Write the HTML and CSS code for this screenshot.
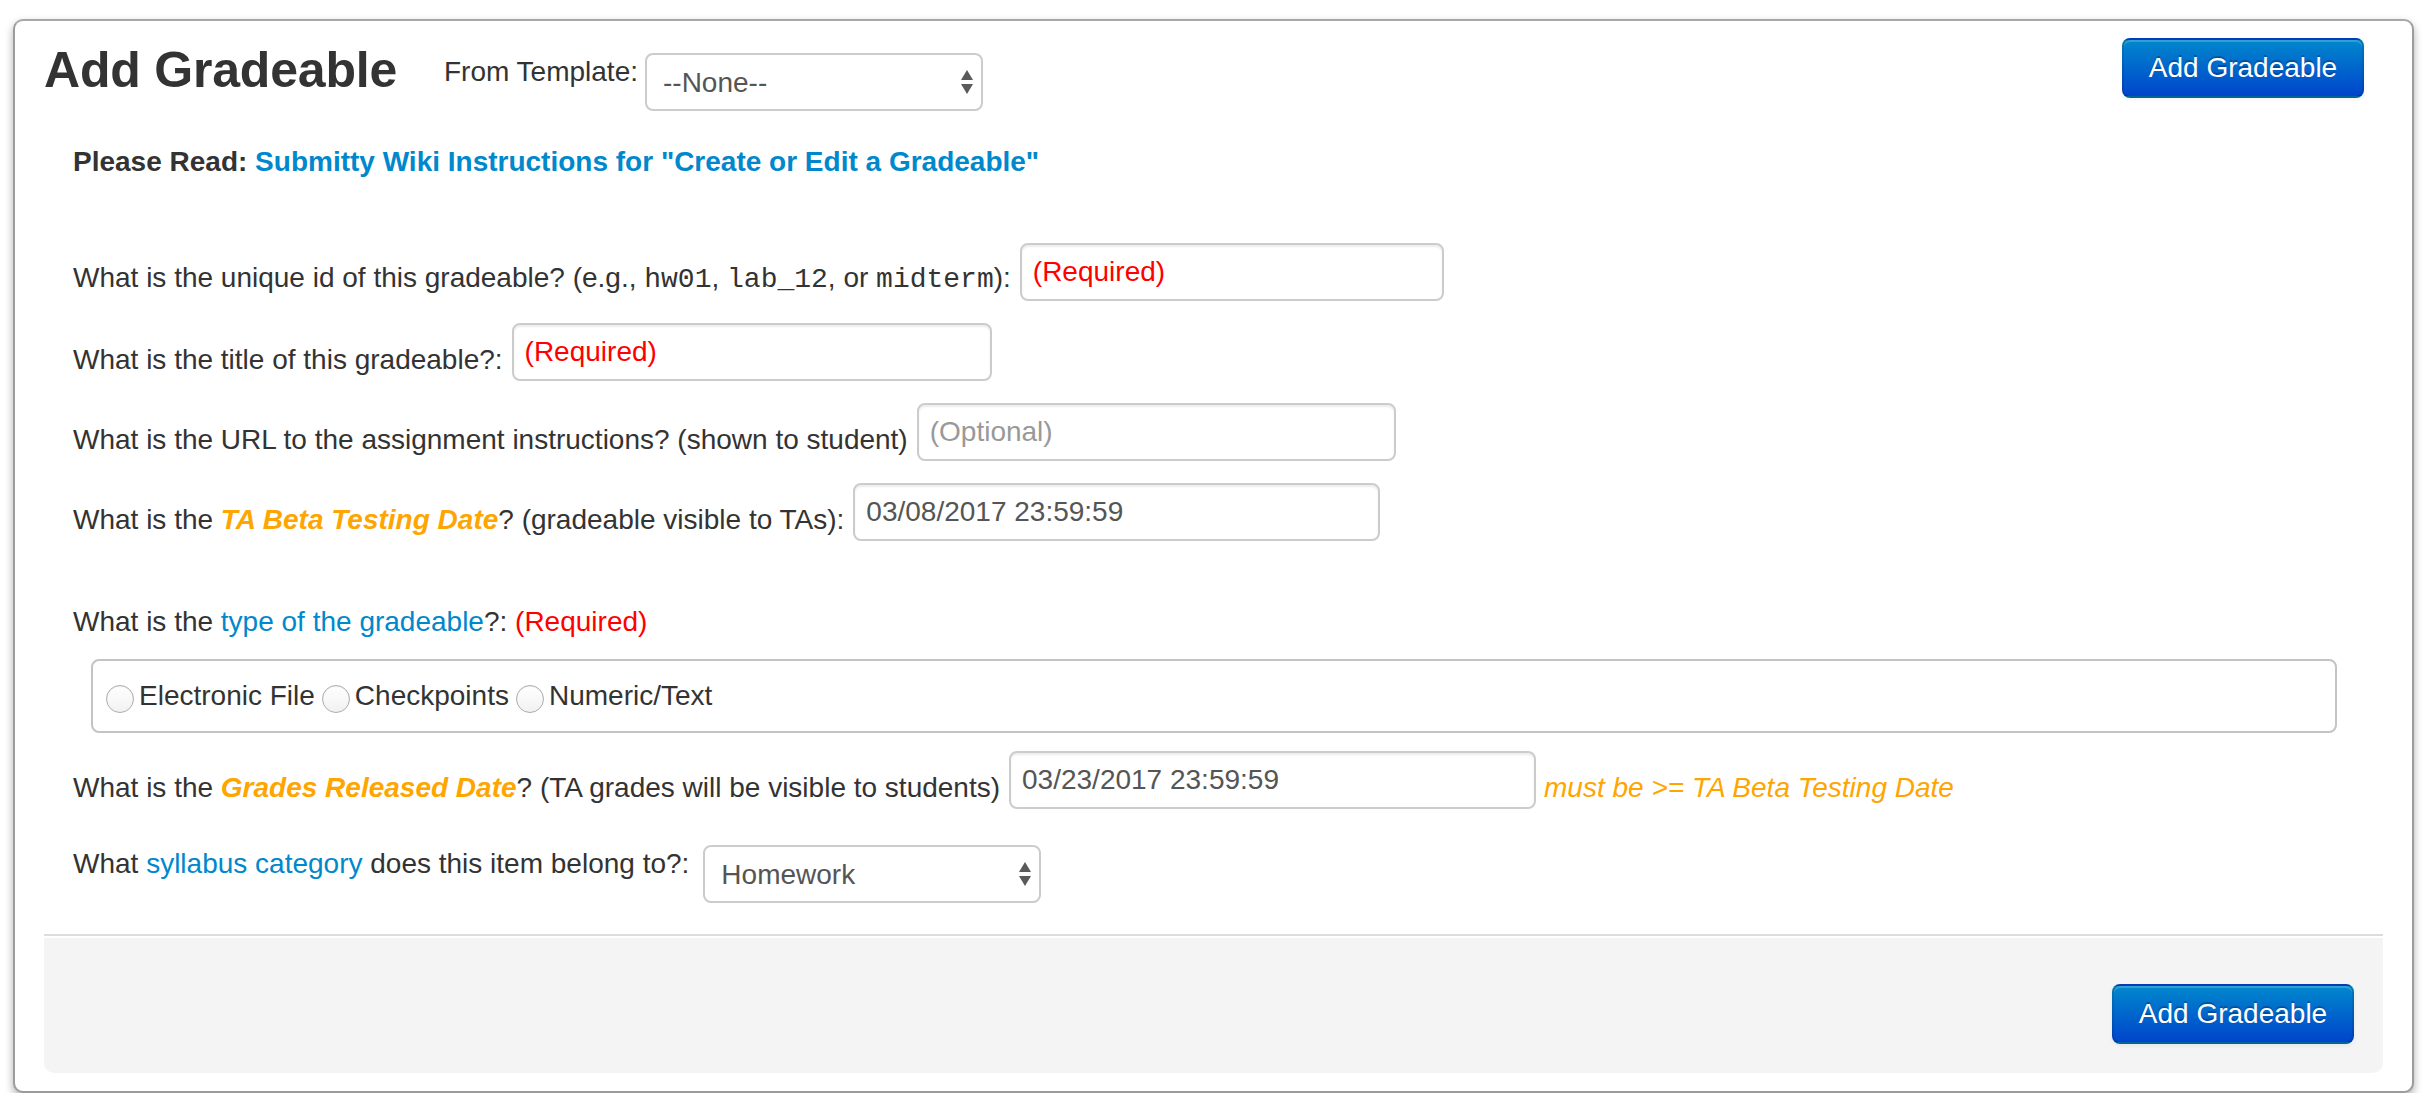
FILE: index.html
```html
<!DOCTYPE html>
<html lang="en">
<head>
<meta charset="utf-8">
<title>Add Gradeable</title>
<link rel="stylesheet" href="styles.css">
</head>
<body>
<div class="card">
  <div class="header">
    <h1 class="title">Add Gradeable</h1>
    <label class="tpl-label">From Template:</label>
    <div class="sel sel-top">
      <select class="select"><option>--None--</option></select>
      <svg class="arrows" viewBox="0 0 12 24" width="12" height="24"><polygon points="6,0 12,10 0,10"/><polygon points="0,14 12,14 6,24"/></svg>
    </div>
    <button class="btn header-btn">Add Gradeable</button>
  </div>

  <p class="please">Please Read: <a class="link" href="#">Submitty Wiki Instructions for "Create or Edit a Gradeable"</a></p>

  <div class="row row-first">
    <span class="label">What is the unique id of this gradeable? (e.g., <code class="mono">hw01</code>, <code class="mono">lab_12</code>, or <code class="mono">midterm</code>):</span>
    <input class="input req w-id" type="text" placeholder="(Required)">
  </div>
  <div class="row">
    <span class="label">What is the title of this gradeable?:</span>
    <input class="input req w-title" type="text" placeholder="(Required)">
  </div>
  <div class="row">
    <span class="label">What is the URL to the assignment instructions? (shown to student)</span>
    <input class="input opt w-url" type="text" placeholder="(Optional)">
  </div>
  <div class="row">
    <span class="label">What is the <b class="hl">TA Beta Testing Date</b>? (gradeable visible to TAs):</span>
    <input class="input w-date" type="text" value="03/08/2017 23:59:59">
  </div>

  <div class="q-type">What is the <a class="link-n" href="#">type of the gradeable</a>?: <span class="red">(Required)</span></div>
  <div class="radio-box">
    <label class="opt-item"><input class="radio" type="radio" name="type">Electronic File</label>
    <label class="opt-item"><input class="radio" type="radio" name="type">Checkpoints</label>
    <label class="opt-item"><input class="radio" type="radio" name="type">Numeric/Text</label>
  </div>

  <div class="row row-release">
    <span class="label">What is the <b class="hl">Grades Released Date</b>? (TA grades will be visible to students)</span>
    <input class="input w-date" type="text" value="03/23/2017 23:59:59">
    <span class="note">must be &gt;= TA Beta Testing Date</span>
  </div>

  <div class="row-sel">
    <span class="label-sel">What <a class="link-n" href="#">syllabus category</a> does this item belong to?:</span>
    <div class="sel sel-cat">
      <select class="select"><option>Homework</option></select>
      <svg class="arrows" viewBox="0 0 12 24" width="12" height="24"><polygon points="6,0 12,10 0,10"/><polygon points="0,14 12,14 6,24"/></svg>
    </div>
  </div>

  <div class="divider"></div>
  <div class="actions">
    <button class="btn">Add Gradeable</button>
  </div>
</div>
</body>
</html>
```
FILE: styles.css
```css
html, body {
  margin: 0;
  padding: 0;
  background: #ffffff;
}
body {
  font-family: "Liberation Sans", Arial, Helvetica, sans-serif;
  color: #333333;
  font-size: 28px;
  line-height: 32px;
}
.card {
  margin: 19px 0 0 13px;
  width: 2401px;
  box-sizing: border-box;
  border: 2px solid #9c9c9c;
  border-top-color: #a8a8a8;
  border-radius: 10px;
  padding: 0 29px 18px;
  box-shadow: 0 4px 8px rgba(0, 0, 0, 0.32);
  background: #fff;
}
.header {
  display: flex;
  align-items: flex-start;
}
.title {
  flex: none;
  width: 400px;
  margin: 19px 0 0 0;
  font-size: 50px;
  line-height: 60px;
  font-weight: bold;
  color: #333;
  letter-spacing: -0.2px;
}
.tpl-label {
  flex: none;
  width: 201px;
  margin-top: 35px;
}
.sel {
  position: relative;
  flex: none;
}
.sel-top {
  margin-top: 32px;
}
.select {
  appearance: none;
  -webkit-appearance: none;
  width: 338px;
  height: 58px;
  box-sizing: border-box;
  border: 2px solid #cccccc;
  border-radius: 8px;
  background: #ffffff;
  padding: 0 40px 0 16px;
  font-family: "Liberation Sans", Arial, Helvetica, sans-serif;
  font-size: 28px;
  color: #555555;
  display: block;
  margin: 0;
}
.arrows {
  position: absolute;
  right: 10px;
  top: 17px;
  fill: #5a5a5a;
  pointer-events: none;
}
.btn {
  flex: none;
  width: 242px;
  height: 60px;
  box-sizing: border-box;
  padding: 0;
  font-family: "Liberation Sans", Arial, Helvetica, sans-serif;
  font-size: 28px;
  color: #ffffff;
  border: 2px solid;
  border-color: rgba(0, 0, 0, 0.1) rgba(0, 0, 0, 0.1) rgba(0, 0, 0, 0.25);
  border-radius: 8px;
  background: linear-gradient(to bottom, #0088cc, #0044cc);
  text-shadow: 0 -2px 0 rgba(0, 0, 0, 0.25);
  box-shadow: inset 0 2px 0 rgba(255, 255, 255, 0.2), 0 2px 4px rgba(0, 0, 0, 0.05);
  cursor: pointer;
}
.header-btn {
  margin: 17px 19px 0 auto;
}
.please {
  margin: 35px 0 0 29px;
  font-weight: bold;
}
.link {
  color: #0088cc;
  text-decoration: none;
}
.link-n {
  color: #0088cc;
  text-decoration: none;
}
.row {
  display: flex;
  align-items: flex-end;
  margin: 22px 0 0 29px;
}
.row-first {
  margin-top: 65px;
}
.label {
  flex: none;
  padding-bottom: 5px;
  white-space: nowrap;
}
.mono {
  font-family: "Liberation Mono", "Courier New", monospace;
  font-size: 28px;
}
.hl {
  color: orange;
  font-style: italic;
  font-weight: bold;
}
.input {
  flex: none;
  height: 58px;
  box-sizing: border-box;
  border: 2px solid #cccccc;
  border-radius: 8px;
  padding: 0 11px;
  margin: 0 0 0 9px;
  font-family: "Liberation Sans", Arial, Helvetica, sans-serif;
  font-size: 28px;
  color: #555555;
  background: #fff;
  box-shadow: inset 0 2px 2px rgba(0, 0, 0, 0.075);
}
.req::placeholder {
  color: #ff0000;
  opacity: 1;
}
.opt::placeholder {
  color: #999999;
  opacity: 1;
}
.w-id { width: 424px; }
.w-title { width: 480px; }
.w-url { width: 479px; }
.w-date { width: 527px; }
.q-type {
  margin: 65px 0 0 29px;
}
.red {
  color: #ff0000;
}
.radio-box {
  margin: 21px 0 0 47px;
  width: 2246px;
  height: 74px;
  box-sizing: border-box;
  border: 2px solid #c4c4c4;
  border-radius: 8px;
  padding-left: 13px;
  display: flex;
  align-items: center;
  gap: 7px;
}
.opt-item {
  display: flex;
  align-items: center;
}
.radio {
  appearance: none;
  -webkit-appearance: none;
  width: 28px;
  height: 28px;
  box-sizing: border-box;
  margin: 6px 5px 0 0;
  border-radius: 50%;
  border: 1px solid #acacac;
  background: linear-gradient(to bottom, #ffffff, #f1f1f1);
  box-shadow: inset 0 1px 1px rgba(0, 0, 0, 0.06);
}
.row-release {
  margin-top: 18px;
}
.note {
  flex: none;
  margin-left: 8px;
  padding-bottom: 5px;
  color: orange;
  font-style: italic;
}
.row-sel {
  display: flex;
  align-items: flex-start;
  margin: 36px 0 0 29px;
}
.label-sel {
  flex: none;
  margin-top: 3px;
}
.sel-cat {
  margin-left: 14px;
}
.divider {
  margin-top: 31px;
  height: 2px;
  background: #dcdcdc;
}
.actions {
  margin-top: 2px;
  padding: 46px 29px 29px;
  background: #f4f4f4;
  border-radius: 0 0 10px 10px;
  display: flex;
  justify-content: flex-end;
}
```
